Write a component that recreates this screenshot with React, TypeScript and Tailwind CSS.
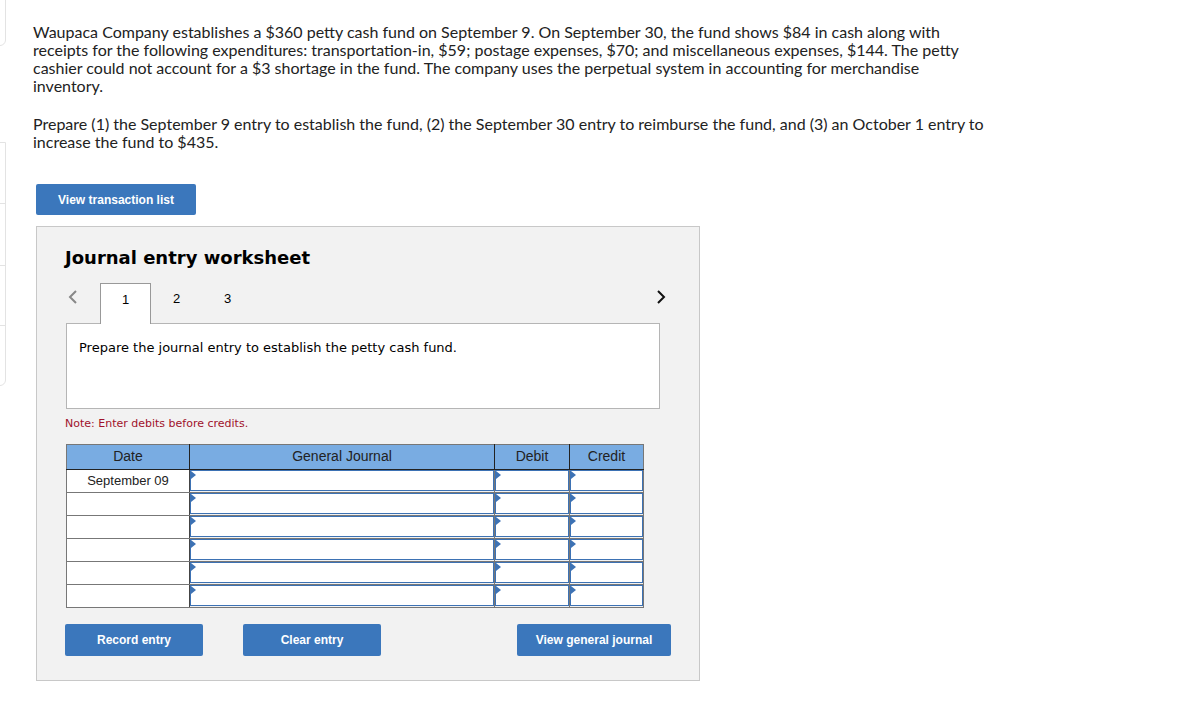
import React from "react";

const rows = ["September 09", "", "", "", "", ""];

function Marker() {
  return (
    <span className="absolute left-0 top-0 w-0 h-0 border-t-[4px] border-b-[4px] border-l-[5px] border-t-transparent border-b-transparent border-l-[#3d72b4]" />
  );
}

function InputCell() {
  return (
    <td className="border border-[#777] p-0 h-[23px]">
      <div className="relative h-[21px] border border-[#3d72b4] bg-white">
        <Marker />
      </div>
    </td>
  );
}

function BlueButton({ label, w }: { label: string; w: string }) {
  return (
    <button
      className={`${w} shrink-0 bg-[#3b77bc] text-white text-[12px] font-bold rounded-[2px] font-['Liberation_Sans',Arial,sans-serif]`}
    >
      {label}
    </button>
  );
}

export default function App() {
  return (
    <div className="flex min-h-[707px] bg-white">
      {/* side rail peeking in from the left */}
      <div className="w-[6px] overflow-hidden shrink-0">
        <div className="ml-[-34px] w-[40px] h-[50px] border border-[#e3e3e3] rounded-br-[6px] -mt-[4px]" />
        <div className="ml-[-34px] w-[40px] mt-[96px] border border-[#e3e3e3] rounded-br-[6px]">
          <div className="h-[61px] border-b border-[#e3e3e3]" />
          <div className="h-[62px] border-b border-[#e3e3e3]" />
          <div className="h-[60px] border-b border-[#e3e3e3]" />
          <div className="h-[59px]" />
        </div>
      </div>

      <div className="pl-[27px] pt-[23px]">
        <div className="w-[955px] text-[16px] leading-[18px] text-[#222] font-['Lato',sans-serif]">
          <p>
            Waupaca Company establishes a $360 petty cash fund on September 9. On September 30, the fund shows $84 in cash along with
            receipts for the following expenditures: transportation-in, $59; postage expenses, $70; and miscellaneous expenses, $144. The petty
            cashier could not account for a $3 shortage in the fund. The company uses the perpetual system in accounting for merchandise inventory.
          </p>
          <p className="mt-[20px]">
            Prepare (1) the September 9 entry to establish the fund, (2) the September 30 entry to reimburse the fund, and (3) an October 1 entry to
            increase the fund to $435.
          </p>
        </div>

        <div className="ml-[3px] mt-[33px]">
          <BlueButton label="View transaction list" w="w-[160px] h-[31px]" />
        </div>

        <div className="ml-[3px] mt-[11px] w-[664px] h-[455px] bg-[#f2f2f2] border border-[#c8c8c8] pl-[28px] pr-[39px]">
          <h2 className="mt-[17px] text-[18px] font-bold text-black font-['DejaVu_Sans',Verdana,sans-serif]">
            Journal entry worksheet
          </h2>

          <div className="mt-[11px] flex items-end h-[41px] relative">
            <svg className="w-[14px] h-[16px] ml-[1px] mb-[18px] mr-[20px]" viewBox="0 0 14 16">
              <path d="M10 2 L4 8 L10 14" fill="none" stroke="#888" strokeWidth="2" />
            </svg>
            <div className="w-[51px] h-[41px] pt-[6px] bg-white border border-b-0 border-[#999] text-center text-[13px] text-black font-['Liberation_Sans',Arial,sans-serif] relative z-10 -mb-[1px]">
              1
            </div>
            <div className="w-[51px] h-[41px] pt-[7px] text-center text-[13px] text-black font-['Liberation_Sans',Arial,sans-serif]">
              2
            </div>
            <div className="w-[51px] h-[41px] pt-[7px] text-center text-[13px] text-black font-['Liberation_Sans',Arial,sans-serif]">
              3
            </div>
            <div className="flex-1" />
            <svg className="w-[14px] h-[16px] mb-[18px] mr-[-8px]" viewBox="0 0 14 16">
              <path d="M4 2 L10 8 L4 14" fill="none" stroke="#111" strokeWidth="2" />
            </svg>
          </div>

          <div className="ml-[1px] h-[86px] bg-white border border-[#b5b5b5] px-[12px] pt-[14px] text-[13px] text-black font-['DejaVu_Sans',Verdana,sans-serif]">
            Prepare the journal entry to establish the petty cash fund.
          </div>

          <p className="mt-[7px] text-[11px] text-[#a0112b] font-['DejaVu_Sans',Verdana,sans-serif]">
            Note: Enter debits before credits.
          </p>

          <table className="mt-[11px] ml-[1px] border-collapse border border-[#777] font-['Liberation_Sans',Arial,sans-serif] text-[#222]">
            <thead>
              <tr className="bg-[#79ace2] h-[25px] text-[14px]">
                <th className="w-[123px] font-normal border border-[#777] border-b-[#222] border-r-[#222]">Date</th>
                <th className="w-[305px] font-normal border border-[#777] border-b-[#222] border-r-[#222]">General Journal</th>
                <th className="w-[75px] font-normal border border-[#777] border-b-[#222] border-r-[#222]">Debit</th>
                <th className="w-[74px] font-normal border border-[#777] border-b-[#222]">Credit</th>
              </tr>
            </thead>
            <tbody>
              {rows.map((d, i) => (
                <tr key={i} className="h-[23px]">
                  <td className="border border-[#777] border-r-[#444] bg-white text-center text-[13px] align-middle">{d}</td>
                  <InputCell />
                  <InputCell />
                  <InputCell />
                </tr>
              ))}
            </tbody>
          </table>

          <div className="mt-[16px] flex">
            <BlueButton label="Record entry" w="w-[138px] h-[32px]" />
            <div className="w-[40px] shrink-0" />
            <BlueButton label="Clear entry" w="w-[138px] h-[32px]" />
            <div className="w-[136px] shrink-0" />
            <BlueButton label="View general journal" w="w-[154px] h-[32px]" />
          </div>
        </div>
      </div>
    </div>
  );
}
